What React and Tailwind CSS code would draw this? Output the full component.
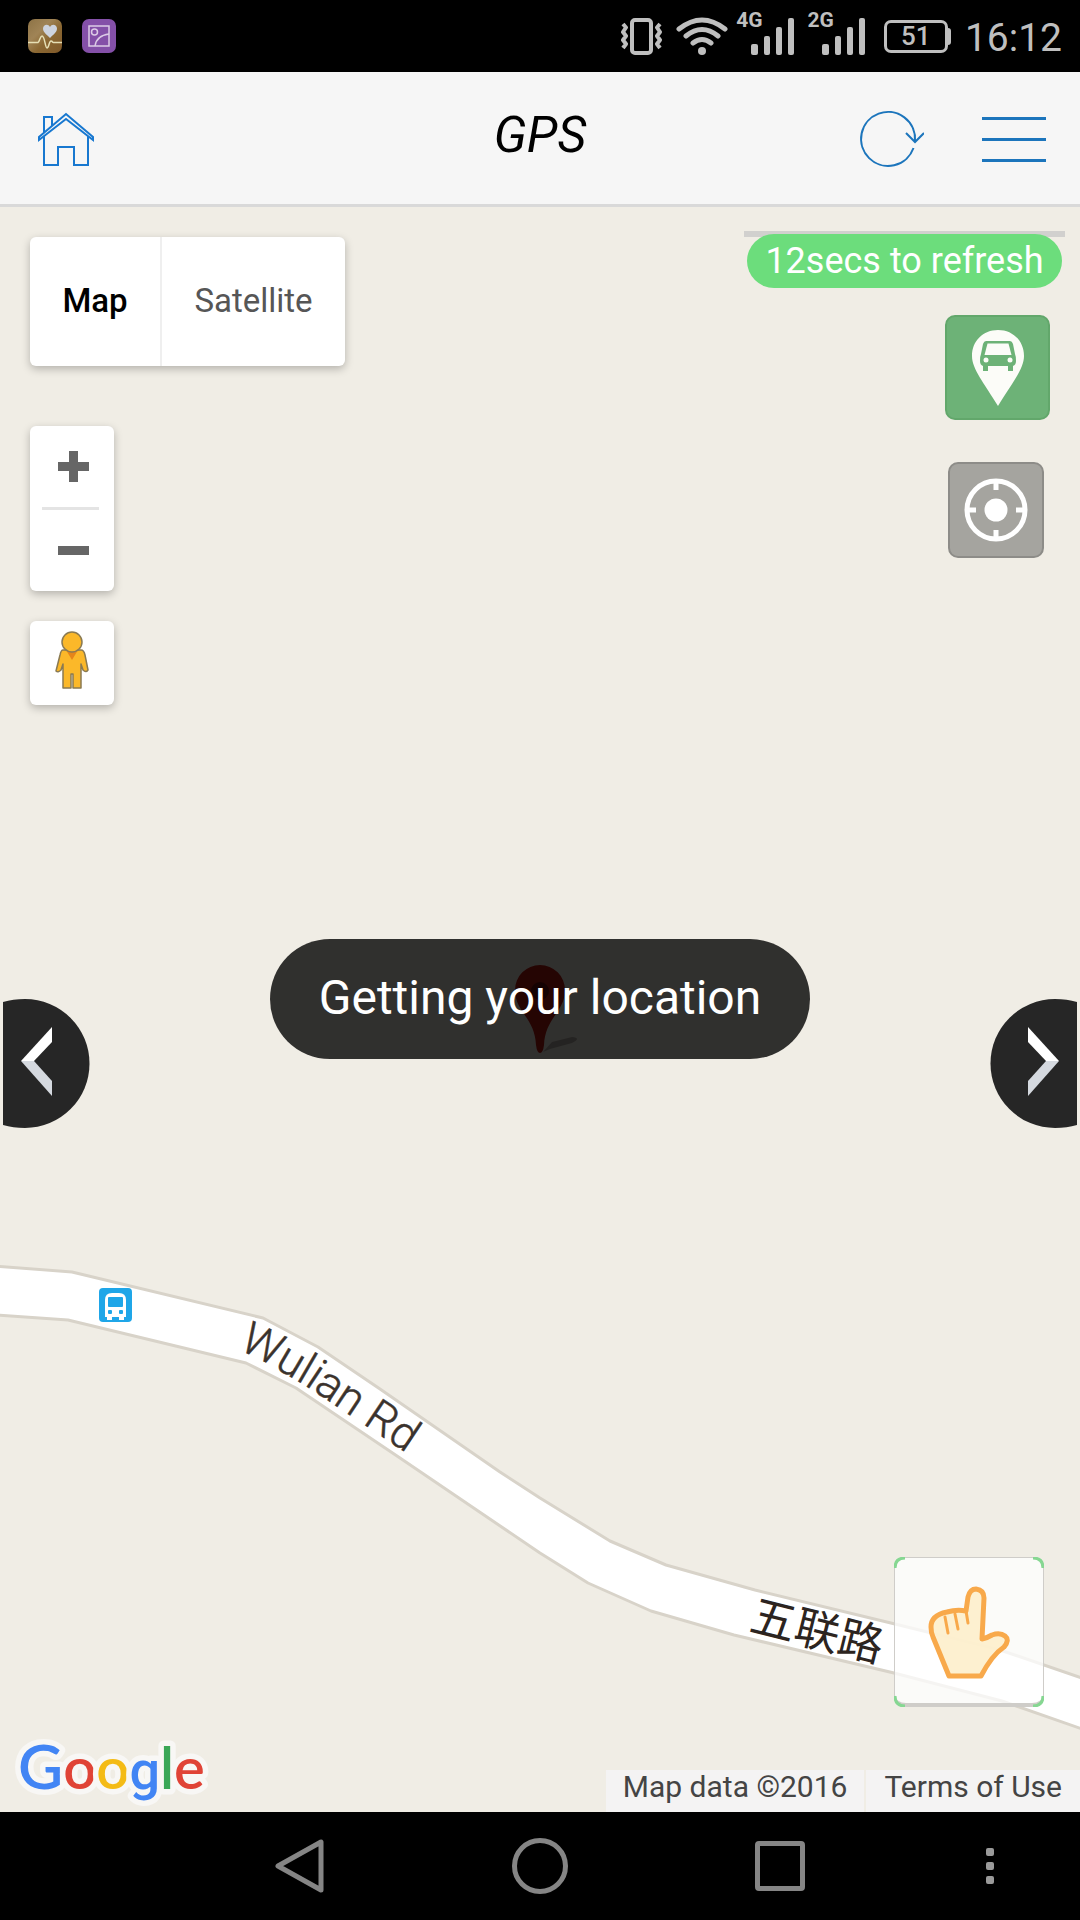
function SignalBars() {
  return (
    <svg className="h-[38px] w-[44px]" viewBox="0 0 44 38" fill="#bfbfbf" aria-hidden="true">
      <rect x="0" y="27" width="7" height="11" rx="2" />
      <rect x="13" y="19" width="6" height="19" rx="2" />
      <rect x="25" y="10" width="6" height="28" rx="2" />
      <rect x="37" y="1" width="6" height="37" rx="2" />
    </svg>
  );
}

function Signal({ label }) {
  return (
    <div className="flex h-[43px] items-end">
      <span className="-mr-[12px] h-[43px] text-[21px] leading-[16px] font-bold">{label}</span>
      <SignalBars />
    </div>
  );
}

function StatusBar() {
  return (
    <div className="flex h-[72px] items-center justify-between bg-black pr-[18px] pl-[28px] text-[#bfbfbf]">
      <div className="flex gap-5">
        <svg className="h-[34px] w-[34px]" viewBox="0 0 34 34" aria-label="Health">
          <defs>
            <linearGradient id="gold" x1="0" y1="0" x2="1" y2="1">
              <stop offset="0" stopColor="#8d7346" />
              <stop offset="0.35" stopColor="#a08456" />
              <stop offset="0.6" stopColor="#8a6732" />
              <stop offset="1" stopColor="#80592a" />
            </linearGradient>
          </defs>
          <rect width="34" height="34" rx="7" fill="url(#gold)" />
          <path d="M22 19 C18 15 15 13 15 9.500 C15 6 20 4 22 8 C24 4 29 6 29 9.500 C29 13 26 15 22 19Z" fill="#cdd3de" />
          <path d="M0 23.500 H10 C12 22 12 17 14 17 C17 17 17 29 19 29 C21 29 21 22 23 22 C25 22 24 24 26 23.500 H34" fill="none" stroke="#e6dfb5" strokeWidth="1.500" />
        </svg>
        <svg className="h-[34px] w-[34px]" viewBox="0 0 34 34" fill="none" stroke="#dccbe6" strokeWidth="1.500" aria-label="Gallery">
          <rect width="34" height="34" rx="7" fill="#8450a8" stroke="none" />
          <rect x="7" y="7" width="20" height="20" />
          <circle cx="12.500" cy="13" r="3" />
          <path d="M13 27 C14 20 19 16 27 15" />
        </svg>
      </div>
      <div className="flex items-center">
        <svg className="h-[38px] w-[42px]" viewBox="0 0 42 38" fill="none" stroke="#bfbfbf" strokeWidth="4" aria-label="Vibrate">
          <rect x="11" y="3" width="19" height="33" rx="3" />
          <path d="M2 7 L5 10.500 L2 15 L5 19 L2 23 L5 27 L2 31 M39 7 L36 10.500 L39 15 L36 19 L39 23 L36 27 L39 31" strokeWidth="4" strokeLinejoin="round" />
        </svg>
        <svg className="ml-[13px] h-[38px] w-[52px]" viewBox="0 0 52 38" fill="none" stroke="#bfbfbf" strokeWidth="5" strokeLinecap="round" aria-label="Wi-Fi">
          <path d="M3 12 Q26 -6 49 12 M10 19 Q26 6 42 19 M17 26 Q26 19 35 26" />
          <circle cx="26" cy="34" r="4" fill="#bfbfbf" stroke="none" />
        </svg>
        <div className="-mt-[5px] ml-[8px] flex gap-[13px]">
          <Signal label="4G" />
          <Signal label="2G" />
        </div>
        <div className="ml-[18px] flex items-center">
          <div className="flex h-[33px] w-[64px] items-center justify-center rounded-[7px] border-[3px] border-[#bfbfbf] text-[26px] leading-[26px] font-medium">51</div>
          <div className="h-[17px] w-[3px] rounded-r-sm bg-[#bfbfbf]" />
        </div>
        <span className="ml-[14px] pt-1 text-[39px] leading-[40px]">16:12</span>
      </div>
    </div>
  );
}

function Header() {
  return (
    <header className="grid h-[135px] grid-cols-3 items-center border-b-[3px] border-[#d9d9d9] bg-[#f6f6f6] px-[34px] text-[#1c75bc]">
      <a href="#home" aria-label="Home" className="justify-self-start">
        <svg className="h-[60px] w-[64px]" viewBox="34 108 64 60" fill="none" stroke="#1878d0" strokeWidth="2">
          <path d="M39 140 V137 L66 114 L93 137 V140 L66 119 Z M44 133 V117 H52 V126" />
          <path d="M44 136 V165 H58 V147 H74 V165 H88 V136" />
        </svg>
      </a>
      <h1 className="-mt-[6px] text-center text-[50px] leading-[60px] text-black italic">GPS</h1>
      <div className="flex items-center gap-[58px] justify-self-end pt-[2px]">
        <button type="button" aria-label="Refresh">
          <svg className="h-[60px] w-[66px]" viewBox="0 0 66 60" fill="none" stroke="currentColor" strokeWidth="2">
            <path d="M55.500 39 A27 27 0 1 1 57 32" />
            <path d="M48 24 L57 33 L66 24" strokeWidth="2" />
          </svg>
        </button>
        <button type="button" aria-label="Menu" className="flex w-[64px] flex-col gap-[18px]">
          <span className="h-[3px] bg-[#1c75bc]" />
          <span className="h-[3px] bg-[#1c75bc]" />
          <span className="h-[3px] bg-[#1c75bc]" />
        </button>
      </div>
    </header>
  );
}

function MapCanvas() {
  return (
    <svg className="absolute inset-0 h-full w-full" viewBox="0 207 1080 1605" preserveAspectRatio="xMidYMid slice">
      <path
        d="M-5 1266 L72 1272 L263 1318 L318 1347 L380 1389 L500 1472 L540 1498 L610 1541 L666 1565 L755 1590 L895 1624 L1000 1650 L1085 1679 V1730 L1002 1701 L894 1673 L734 1635 L651 1611 L588 1583 L540 1553 L400 1458 L296 1388 L246 1363 L68 1320 L-5 1315 Z"
        fill="#fff" stroke="#d8d3c9" strokeWidth="3" strokeLinejoin="round"
      />
      <path id="label-en" d="M238 1349 L265 1362 L306 1386 L348 1414 L460 1489" fill="none" />
      <text fill="#3a322c" stroke="#3a322c" strokeWidth="0.5" className="font-['Roboto'] text-[45px] font-light">
        <textPath href="#label-en">Wulian Rd</textPath>
      </text>
      <text transform="translate(748 1630) rotate(14)" fill="#2c2420" className="font-['Noto_Sans_CJK_SC',sans-serif] text-[45px]">五联路</text>
      <g>
        <rect x="99" y="1288" width="33" height="34" rx="4" fill="#1fa6e8" />
        <path d="M105 1317 V1300 Q105 1293 112 1293 H119 Q126 1293 126 1300 V1317 H124 V1320 H119 V1317 H112 V1320 H107 V1317 Z" fill="#fff" />
        <rect x="108" y="1297" width="15" height="10" rx="1" fill="#1fa6e8" />
        <rect x="108" y="1310" width="4" height="4" rx="1" fill="#1fa6e8" />
        <rect x="119" y="1310" width="4" height="4" rx="1" fill="#1fa6e8" />
      </g>
      <g>
        <path d="M543 1052 L552 1042 L572 1037 Q582 1038 572 1043 L550 1049 Z" fill="#b5b1a8" />
        <path d="M540 1053 Q537 1053 536 1045 C535 1018 515 1012 515 990 A25 25 0 0 1 565 990 C565 1012 545 1018 544 1045 Q543 1053 540 1053Z" fill="#b81a12" />
        <circle cx="540" cy="991" r="9" fill="#6a0e0a" />
      </g>
    </svg>
  );
}

function MapTools() {
  return (
    <div className="flex flex-col items-start pt-[30px] pl-[30px]">
      <div className="flex h-[129px] rounded-[6px] bg-white text-[33px] shadow-[0_3px_8px_rgba(0,0,0,0.25)]">
        <button type="button" aria-pressed="true" className="w-[132px] rounded-l-[6px] border-r-2 border-[#efefef] pb-[2px] font-medium text-black">Map</button>
        <button type="button" aria-pressed="false" className="w-[183px] pb-[2px] text-[#565656]">Satellite</button>
      </div>
      <div className="mt-[60px] flex h-[165px] w-[84px] flex-col rounded-[6px] bg-white shadow-[0_3px_8px_rgba(0,0,0,0.25)]">
        <button type="button" aria-label="Zoom in" className="flex flex-1 items-center justify-center">
          <svg className="ml-[3px] h-[31px] w-[31px]" viewBox="0 0 31 31" fill="#666"><path d="M11 0h9v11h11v9H20v11h-9V20H0v-9h11z" /></svg>
        </button>
        <span className="ml-[12px] h-[3px] w-[57px] bg-[#e4e4e4]" />
        <button type="button" aria-label="Zoom out" className="flex flex-1 items-center justify-center">
          <svg className="ml-[3px] h-[31px] w-[31px]" viewBox="0 0 31 31" fill="#666"><path d="M0 11h31v9H0z" /></svg>
        </button>
      </div>
      <button type="button" aria-label="Street View" className="mt-[30px] flex h-[84px] w-[84px] justify-center rounded-[6px] bg-white pt-[9px] shadow-[0_3px_8px_rgba(0,0,0,0.25)]">
        <svg className="h-[60px] w-[36px]" viewBox="0 0 36 60" stroke="#8a7a52" strokeWidth="1.500" strokeLinejoin="round">
          <path d="M9 20 L27 20 Q30 20 31 25 L34 40 Q32 43 29 40 L27 34 V58 H19 V44 H17 V58 H9 V34 L7 40 Q4 43 2 41 L6 25 Q7 20 9 20Z" fill="#fbb829" />
          <path d="M12 20 H24 L18 30Z" fill="#e5851a" stroke="none" />
          <circle cx="18" cy="12" r="10" fill="#fbb829" />
        </svg>
      </button>
    </div>
  );
}

function TrackingTools() {
  return (
    <div className="flex flex-col items-end pt-[24px] pr-[15px]">
      <div className="h-[6px] w-[321px] bg-[#d1d0ce]" />
      <div className="relative -mt-[3px] mr-[3px] flex h-[54px] w-[315px] items-center justify-center rounded-full bg-[#6cdd7c] text-[36px] leading-[54px] text-white">
        12secs to refresh
      </div>
      <button type="button" aria-label="Vehicle location" className="mt-[27px] mr-[15px] flex h-[105px] w-[105px] items-center justify-center rounded-[10px] border-2 border-[#62a76b] bg-[#6db277]">
        <svg className="h-[76px] w-[52px]" viewBox="0 0 52 76" fill="#fcfcf8">
          <path d="M26 0 C11 0 0 11 0 26 C0 39 12 53 26 76 C40 53 52 39 52 26 C52 11 41 0 26 0Z" />
          <path d="M14 11 H38 Q40 11 41 14 L43 24 Q44 26 44 31 Q44 35 41 36 V41 H36 V36 H16 V41 H11 V36 Q8 35 8 31 Q8 26 9 24 L11 14 Q12 11 14 11Z" fill="#6db277" />
          <path d="M15.500 13.500 H36.500 L39.500 25 H12.500Z" />
          <circle cx="14" cy="30" r="2.500" />
          <circle cx="38" cy="30" r="2.500" />
        </svg>
      </button>
      <button type="button" aria-label="My location" className="mt-[42px] mr-[21px] flex h-[96px] w-[96px] items-center justify-center rounded-[10px] border-2 border-[#8d8c88] bg-[#a5a49f]">
        <svg className="h-[64px] w-[64px]" viewBox="0 0 64 64" fill="none" stroke="#fff" strokeWidth="5">
          <circle cx="32" cy="32" r="29" />
          <circle cx="32" cy="32" r="11.500" fill="#fff" stroke="none" />
          <path d="M32 5 V12 M32 52 V59 M5 32 H12 M52 32 H59" />
        </svg>
      </button>
    </div>
  );
}

function PageArrow({ side }) {
  const left = side === "left";
  return (
    <button type="button" aria-label={left ? "Previous" : "Next"} className="h-[129px] w-[87px]">
      <svg className={left ? "h-full w-full" : "h-full w-full -scale-x-100"} viewBox="0 0 87 129">
        <path d="M0 3 Q10 0 22 0 A64.500 64.500 0 0 1 22 129 Q10 129 0 126Z" fill="#262626" />
        <path d="M49 28 L18 62 H31 L49 43Z" fill="#fff" />
        <path d="M18 62 L49 97 V82 L31 62Z" fill="#d5d9df" />
      </svg>
    </button>
  );
}

function GoogleLogo() {
  return (
    <svg className="ml-[12px] h-[90px] w-[210px]" viewBox="0 0 210 90" aria-label="Google">
      <text x="6" y="67" stroke="#f8f7f5" strokeWidth="11" strokeLinejoin="round" paintOrder="stroke" className="font-['Lato'] text-[58px] font-semibold">
        <tspan fill="#4285f4" className="text-[62px]">G</tspan>
        <tspan fill="#e04336">o</tspan>
        <tspan fill="#f4bb16">o</tspan>
        <tspan fill="#4285f4" className="font-['Roboto'] text-[54px] font-medium">g</tspan>
        <tspan fill="#3aa757">l</tspan>
        <tspan fill="#e04336">e</tspan>
      </text>
    </svg>
  );
}

function NavBar() {
  return (
    <nav className="grid h-[108px] grid-cols-[1fr_240px_240px_180px] items-center bg-black text-[#858585]">
      <button type="button" aria-label="Back" className="mr-[93px] justify-self-end">
        <svg className="h-[60px] w-[54px]" viewBox="0 0 54 60" fill="none" stroke="currentColor" strokeWidth="5" strokeLinejoin="round"><path d="M48 6 V54 L5 30Z" /></svg>
      </button>
      <button type="button" aria-label="Home screen" className="justify-self-center">
        <svg className="h-[56px] w-[56px]" viewBox="0 0 56 56" fill="none" stroke="currentColor" strokeWidth="5"><circle cx="28" cy="28" r="25.500" /></svg>
      </button>
      <button type="button" aria-label="Recent apps" className="h-[50px] w-[50px] justify-self-center rounded-[4px] border-[5px] border-[#858585]" />
      <button type="button" aria-label="More" className="flex flex-col gap-[6px] justify-self-center">
        <span className="h-2 w-2 rounded-[2px] bg-[#9a9a9a]" />
        <span className="h-2 w-2 rounded-[2px] bg-[#9a9a9a]" />
        <span className="h-2 w-2 rounded-[2px] bg-[#9a9a9a]" />
      </button>
    </nav>
  );
}

export default function App() {
  return (
    <div className="flex min-h-screen flex-col bg-[#f0ede5] font-['Roboto','Noto_Sans_CJK_SC',sans-serif]">
      <StatusBar />
      <Header />
      <main className="relative flex flex-1 flex-col">
        <MapCanvas />
        <div className="relative flex items-start justify-between">
          <MapTools />
          <TrackingTools />
        </div>
        <div className="relative mt-[294px] flex justify-between px-[3px]">
          <PageArrow side="left" />
          <PageArrow side="right" />
          <div role="status" className="absolute -top-[60px] left-1/2 flex h-[120px] w-[540px] -translate-x-1/2 items-center justify-center rounded-full bg-black/80 pb-[2px] text-[48px] leading-[56px] whitespace-nowrap text-white">
            Getting your location
          </div>
        </div>
        <div className="relative mt-auto flex flex-col">
          <button type="button" aria-label="Tap command" className="relative mr-[36px] mb-[15px] flex h-[150px] w-[150px] items-center justify-center self-end rounded-[12px] border border-b-4 border-[#cfcdc9] bg-white/75 pt-1">
            <svg className="absolute -top-px -left-px h-[150px] w-[150px]" viewBox="0 0 150 150" fill="none" stroke="#86d792" strokeWidth="3" aria-hidden="true">
              <path d="M1 11 Q1 1 11 1 M139 1 Q149 1 149 11 M1 139 Q1 149 11 149 M139 149 Q149 149 149 139" />
            </svg>
            <svg className="h-[94px] w-[82px]" viewBox="0 0 82 94" fill="#fdeecb" fillOpacity="0.9" stroke="#f8a94b" strokeWidth="5" strokeLinejoin="round" strokeLinecap="round">
              <path d="M21 90 L5 51 Q3 47 3 41 C3 33 9 28 19 26 Q29 23 38 25 L40 11 Q42 3 48 3 Q56 4 56 12 L54 53 Q59 52 64 49 Q72 46 77 50 Q82 54 76 61 Q64 69 53 90 Z" />
              <path d="M17 31 L20 47 M27 28 L30 43 M38 25 L40 37" strokeWidth="3" />
            </svg>
          </button>
          <div className="flex items-end justify-between">
            <GoogleLogo />
            <div className="flex h-[42px] gap-[2px] text-[30px] leading-[34px] text-[#444]">
              <span className="bg-[#f4f3f3] px-[17px]">Map data ©2016</span>
              <a href="#terms" className="bg-[#f4f3f3] px-[18px]">Terms of Use</a>
            </div>
          </div>
        </div>
      </main>
      <NavBar />
    </div>
  );
}
